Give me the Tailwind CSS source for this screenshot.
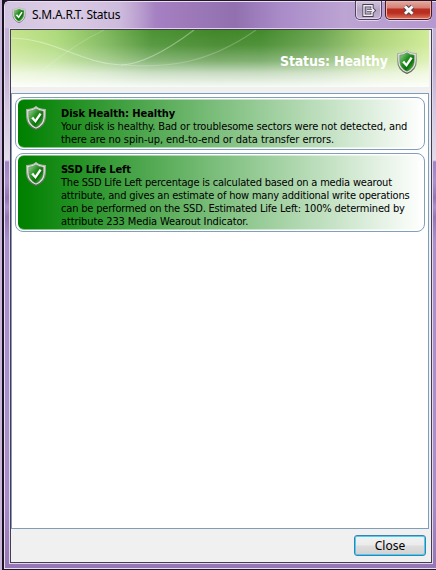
<!DOCTYPE html>
<html lang="en">
<head>
<meta charset="utf-8">
<title>S.M.A.R.T. Status</title>
<script src="https://cdn.jsdelivr.net/npm/@tailwindcss/browser@4"></script>
</head>
<body class="w-[436px] h-[570px] overflow-hidden bg-[#21152a] font-['DejaVu_Sans_Condensed','DejaVu_Sans',sans-serif] text-black">
<svg class="absolute w-0 h-0">
  <defs>
    <linearGradient id="metal" x1="0" y1="0" x2="0" y2="1"><stop offset="0" stop-color="#b5c0b0"/><stop offset=".5" stop-color="#8b9688"/><stop offset="1" stop-color="#596456"/></linearGradient>
    <linearGradient id="leaf" x1="0" y1="0" x2="1" y2="1"><stop offset="0" stop-color="#a2d59e"/><stop offset=".4" stop-color="#279222"/><stop offset=".65" stop-color="#087109"/><stop offset="1" stop-color="#69d24d"/></linearGradient>
    <symbol id="shield" viewBox="0 0 20 24">
      <path d="M10 .6Q13.2 3.4 19.3 3.5V10.5C19.3 17 15.7 21.2 10 23.4C4.3 21.2.7 17 .7 10.5V3.5Q6.8 3.4 10 .6Z" fill="#e4eae1" stroke="url(#metal)" stroke-width="1.2"/>
      <path d="M10 2.7Q13 4.9 17.2 5.2V10.5C17.2 15.7 14.5 19.2 10 21.2C5.5 19.2 2.8 15.7 2.8 10.5V5.2Q7 4.9 10 2.7Z" fill="url(#leaf)" stroke="#65785f" stroke-width=".6"/>
      <path d="M5.2 12.2L7.3 10.8L9.2 13.6L13.6 7L15.6 8.2L9.6 17.1Z" fill="#fff"/>
    </symbol>
  </defs>
</svg>
<div class="flex h-full">
  <div class="w-[2px] bg-[#c9b6da]"></div>
  <div class="w-[2px] bg-[#19121f]"></div>
  <div class="flex flex-col w-[432px] h-[568px] mt-px rounded-tl-[5px] border-t border-l border-b border-[#eadff2] bg-[linear-gradient(180deg,#c6b4d6_0,#c1aed4_60px,#d5c8e1_110px,#e2dcea_158px,#a184c1_160px,#ac90ce_180px,#9475b1_196px,#ab8fcb_205px,#9576b2_215px,#ac90ce_240px,#ab8fcb_440px,#a88bc8_500px,#9576b5_568px)]">
    <header class="relative flex shrink-0 h-[26px] rounded-tl-[5px] bg-[radial-gradient(circle_at_55px_14px,#e3d8ebcc_0,#d9cbe5aa_60px,transparent_95px),linear-gradient(90deg,#c4b2d5_0,#b79ccc_110px,#a47fc1_155px,#9270af_230px,#a98bc8_275px,#bca4d3_340px,#b598cf_431px)]">
      <svg class="w-[14px] h-[16px] ml-[7px] mt-[5px]"><use href="#shield"/></svg>
      <div class="ml-[6px] mt-[4px] text-[12px] leading-[17px] whitespace-nowrap font-['Noto_Sans',sans-serif] tracking-[-0.23px]">S.M.A.R.T. Status</div>
      <div class="absolute left-[350px] -top-px w-[27px] h-[19px] rounded-b-[5px] border border-t-0 border-[#514060] bg-linear-to-b from-[#d2c5dc] via-[#b4a2c3] to-[#c3b2d3] shadow-[inset_0_0_0_1px_#e1d7e8,0_1px_0_#e1d5ed]">
        <svg class="w-[25px] h-[18px]" viewBox="0 0 25 18"><path d="M16 7V4.7H8V14.3H16V12M11 9.5H18M15.3 6.8L18 9.5L15.3 12.2" fill="none" stroke="#494253" stroke-width="3.2"/><path d="M16 7V4.7H8V14.3H16V12M11 9.5H18M15.3 6.8L18 9.5L15.3 12.2" fill="none" stroke="#f4f2f5" stroke-width="1.4"/></svg>
      </div>
      <div class="absolute left-[380px] -top-px w-[47px] h-[19px] rounded-b-[5px] border border-t-0 border-[#4a1b26] bg-[linear-gradient(180deg,#e5aaa1_0,#d38073_7px,#bc2e22_8px,#b92e20_12px,#dd7960_18px)] shadow-[inset_0_0_0_1px_#eeb0a5,0_1px_0_#e1d5ed]">
        <svg class="w-[45px] h-[18px]" viewBox="0 0 45 18"><path d="M19 5.5L26.5 12.8M26.5 5.5L19 12.8" stroke="#514653" stroke-width="5"/><path d="M19 5.5L26.5 12.8M26.5 5.5L19 12.8" stroke="#fafafa" stroke-width="3"/></svg>
      </div>
    </header>
    <main class="flex flex-col ml-[4px] w-[424px] h-[536px] border border-[#e0d6e9]">
      <div class="flex flex-col w-[422px] h-[534px] border border-[#473c51] bg-[#f0f0f0]">
        <section class="relative w-[418px] h-[57px] shrink-0">
          <div class="absolute inset-0 bg-[linear-gradient(90deg,#c5e48c_0,#aeda7b_45px,#7fb85c_95px,#4d9335_140px,#418729_205px,#438a2c_250px,#6ca550_310px,#a6cf73_360px,#cfeb94_418px)]"></div>
          <div class="absolute inset-0 bg-[linear-gradient(180deg,#ffffff00_0,#ffffff12_15px,#ffffff55_31px,#ffffffb5_43px,#fffffff5_57px)]"></div>
          <svg class="absolute inset-0 w-[418px] h-[57px]" fill="none" stroke="#fff"><path d="M0 8C45 9 68 33 110 35Q138 34 183 0" stroke-opacity=".35" stroke-width="1.2"/><path d="M32 40Q65 13 93 0" stroke-opacity=".2"/><path d="M110 35C155 38 195 35 245 0" stroke-opacity=".22" stroke-width="1.2"/></svg>
          <div class="relative flex">
            <div class="ml-[269px] mt-[22px] w-[109px] text-[14px] leading-[18px] font-bold text-white whitespace-nowrap tracking-[-0.18px]">Status: Healthy</div>
            <svg class="w-[20px] h-[24px] ml-[8px] mt-[20px]"><use href="#shield"/></svg>
          </div>
        </section>
        <section class="flex flex-col gap-[3px] mt-[6px] w-[418px] h-[436px] shrink-0 border border-[#7f9db9] bg-white pl-[3px] pt-[3px]">
          <article class="w-[410px] h-[53px] rounded-[8px] border border-[#829fbc] bg-white p-px pl-[2px]">
            <div class="flex w-full h-full rounded-[6px] border-y border-white/50 bg-[linear-gradient(90deg,#008000_0,#008000_3px,#fff_100%)]">
              <svg class="w-[20px] h-[24px] ml-[8px] mt-[6px] shrink-0"><use href="#shield"/></svg>
              <div class="ml-[15px] mt-[7px] text-[11px] leading-[13px] whitespace-nowrap">
                <h2 class="font-bold tracking-[-0.04px]">Disk Health: Healthy</h2>
                <p class="tracking-[-0.13px]">Your disk is healthy. Bad or troublesome sectors were not detected, and</p>
                <p class="tracking-[-0.08px]">there are no spin-up, end-to-end or data transfer errors.</p>
              </div>
            </div>
          </article>
          <article class="w-[410px] h-[79px] rounded-[8px] border border-[#829fbc] bg-white p-px pl-[2px]">
            <div class="flex w-full h-full rounded-[6px] border-y border-white/50 bg-[linear-gradient(90deg,#008000_0,#008000_3px,#fff_100%)]">
              <svg class="w-[20px] h-[24px] ml-[8px] mt-[6px] shrink-0"><use href="#shield"/></svg>
              <div class="ml-[15px] mt-[7px] text-[11px] leading-[13px] whitespace-nowrap">
                <h2 class="font-bold tracking-[-0.14px]">SSD Life Left</h2>
                <p class="tracking-[-0.2px]">The SSD Life Left percentage is calculated based on a media wearout</p>
                <p class="tracking-[-0.2px]">attribute, and gives an estimate of how many additional write operations</p>
                <p class="tracking-[-0.18px]">can be performed on the SSD. Estimated Life Left: 100% determined by</p>
                <p class="tracking-[-0.11px]">attribute 233 Media Wearout Indicator.</p>
              </div>
            </div>
          </article>
        </section>
        <footer class="flex justify-end pr-[5px] pt-[6px]">
          <button class="w-[72px] h-[21px] rounded-[3px] border border-[#3c7fb1] shadow-[inset_0_0_0_1px_#44d2f4] bg-[linear-gradient(180deg,#f2f2f2_0,#ebebeb_9px,#dddddd_10px,#cfcfcf_21px)] text-[12px] leading-[18px] font-['Noto_Sans',sans-serif]">Close</button>
        </footer>
      </div>
    </main>
  </div>
</div>
</body>
</html>
